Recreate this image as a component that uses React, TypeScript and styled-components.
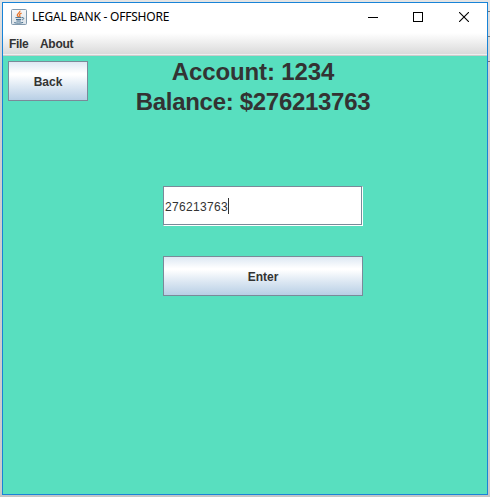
import React from 'react';
import styled, { createGlobalStyle } from 'styled-components';

const GlobalStyle = createGlobalStyle`
  * { box-sizing: border-box; }
  body { margin: 0; overflow: hidden; }
`;

const Desktop = styled.div`
  width: 490px;
  height: 497px;
  padding: 2px;
  background:
    linear-gradient(#777, #777) 488px 11px / 2px 1px no-repeat,
    linear-gradient(#777, #777) 488px 36px / 2px 1px no-repeat,
    linear-gradient(#777, #777) 488px 61px / 2px 1px no-repeat,
    linear-gradient(#e4e4e4, #cfcfcf 80px, #cbcbcb 490px, #c4c4c4);
`;

const Window = styled.div`
  width: 486px;
  height: 493px;
  display: flex;
  flex-direction: column;
  border: 1px solid #1883d7;
  background: #fff;
  font: bold 12px 'Liberation Sans', Arial, sans-serif;
  color: #333;
`;

const TitleBar = styled.header`
  height: 30px;
  flex: none;
  display: flex;
  align-items: center;
  padding: 0 0 2px 8px;
`;

const Title = styled.h1`
  margin: 0 auto 0 5px;
  font: 400 12px/16px 'Noto Sans', 'Open Sans', sans-serif;
  letter-spacing: -0.22px;
  color: #000;
  white-space: nowrap;
`;

const WindowControl = styled.span<{ $width: number }>`
  width: ${({ $width }) => $width}px;
  height: 28px;
  display: flex;
  align-items: center;
  justify-content: center;
`;

const MenuBar = styled.nav`
  height: 23px;
  flex: none;
  display: flex;
  align-items: center;
  gap: 12px;
  padding: 0 6px 1px;
  background: linear-gradient(#fff, #dadada 21px, #eee 21px, #eee 22px, #ccc 22px);
`;

const MenuItem = styled.span<{ $width: number }>`
  width: ${({ $width }) => $width}px;
  line-height: 14px;
  letter-spacing: -0.3px;
  white-space: nowrap;
`;

const Panel = styled.main`
  flex: 1;
  display: grid;
  grid-template-columns: 80px 75px 200px;
  grid-template-rows: 40px 85px 40px 30px 40px;
  padding: 5px 0 0 5px;
  background: #58dfbf;
`;

const Button = styled.button<{ $row: number; $column: number }>`
  grid-row: ${({ $row }) => $row};
  grid-column: ${({ $column }) => $column};
  height: 40px;
  padding: 1px 0 0;
  border: 1px solid #7a8a99;
  border-radius: 0;
  background: linear-gradient(#dde8f3 0%, #fff 30%, #fff 34%, #dde8f3 64%, #b8cfe5 100%);
  color: #333;
  font: inherit;
`;

const Summary = styled.section`
  grid-row: 1 / span 2;
  grid-column: 2 / span 2;
  width: 300px;
  margin: -4px 0 0 15px;
  height: 60px;
  text-align: center;
  font-size: 24px;
  line-height: 30px;
`;

const SummaryLine = styled.div<{ $spacing: number }>`
  letter-spacing: ${({ $spacing }) => $spacing}px;
`;

const AmountField = styled.div`
  grid-row: 3;
  grid-column: 3;
  height: 40px;
  display: flex;
  align-items: center;
  padding-left: 1px;
  background: #fff;
  border: 1px solid #7a8a99;
  border-right-color: #fff;
  border-bottom-color: #fff;
  box-shadow: inset -1px -1px #7a8a99;
  font-weight: 400;
  font-size: 12px;
`;

const Amount = styled.span`
  width: 63px;
  padding-top: 2px;
  letter-spacing: 0.33px;
`;

const Caret = styled.span`
  width: 1px;
  height: 16px;
  background: #333;
`;

function JavaIcon() {
  return (
    <svg width="16" height="16" viewBox="0 0 16 16" fill="none">
      <defs>
        <linearGradient id="tile" x1="0" y1="0" x2="0" y2="1">
          <stop stopColor="#f7f8f9" />
          <stop offset="1" stopColor="#dce3e9" />
        </linearGradient>
      </defs>
      <rect x=".5" y=".5" width="15" height="15" rx="1" fill="url(#tile)" stroke="#8199ad" />
      <path d="M8.9 1.8c.6 2-3 2.7-2.6 4.4.1.7.9 1.1 1.3 1.9M10.6 4.2C8.3 5 8.1 5.8 8.8 6.6c.5.6.2 1-.3 1.5" stroke="#e8772e" strokeWidth="1.3" />
      <path d="M4.4 8.6h6.2M5 10.5h5.2M5.4 12h4.4M3.2 13.6c2.6.8 6.5.7 8.9-.2M11 8.6c2.4-.3 2.3 1.7.1 2.3" stroke="#47708f" />
    </svg>
  );
}

export default function App() {
  return (
    <>
      <GlobalStyle />
      <Desktop>
        <Window>
          <TitleBar>
            <JavaIcon />
            <Title>LEGAL BANK - OFFSHORE</Title>
            <WindowControl $width={44}>
              <svg width="10" height="10" shapeRendering="crispEdges"><path d="M0 5h10v1H0z" /></svg>
            </WindowControl>
            <WindowControl $width={46}>
              <svg width="10" height="10" shapeRendering="crispEdges"><path d="M.5.5h9v9h-9z" fill="none" stroke="#000" /></svg>
            </WindowControl>
            <WindowControl $width={46}>
              <svg width="10" height="10"><path d="M0 0l10 10M10 0L0 10" stroke="#000" strokeWidth="1.1" /></svg>
            </WindowControl>
          </TitleBar>
          <MenuBar>
            <MenuItem $width={19}>File</MenuItem>
            <MenuItem $width={34}>About</MenuItem>
          </MenuBar>
          <Panel>
            <Button $row={1} $column={1}>Back</Button>
            <Summary>
              <SummaryLine $spacing={-0.12}>Account: 1234</SummaryLine>
              <SummaryLine $spacing={-0.3}>Balance: $276213763</SummaryLine>
            </Summary>
            <AmountField>
              <Amount>276213763</Amount>
              <Caret />
            </AmountField>
            <Button $row={5} $column={3}>Enter</Button>
          </Panel>
        </Window>
      </Desktop>
    </>
  );
}
